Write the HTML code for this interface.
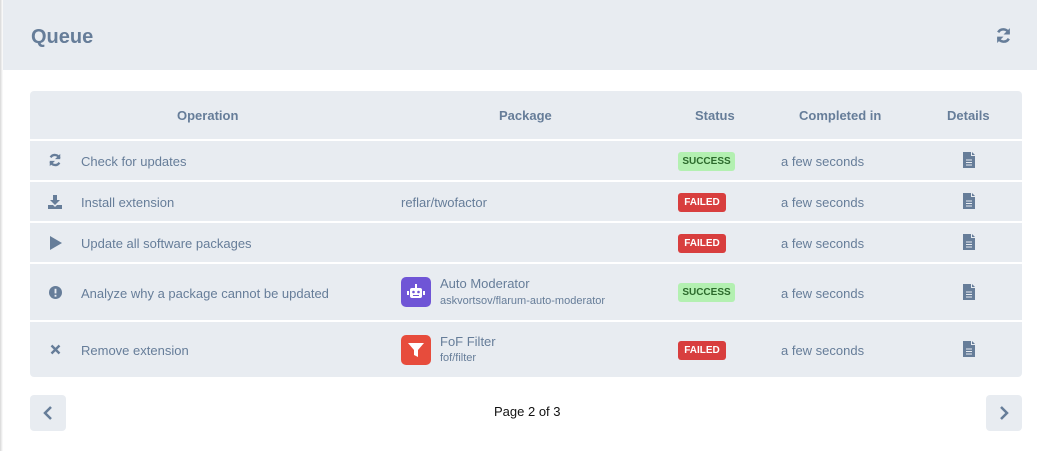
<!DOCTYPE html><html><head><style>
body{margin:0;width:1037px;height:451px;background:#fff;font-family:"Liberation Sans",sans-serif;color:#667d99;position:relative;overflow:hidden}
.hd{position:absolute;left:0;top:0;width:1037px;height:70px;background:#e8ecf1}
.sh{position:absolute;left:0;top:0;width:3px;height:451px;background:linear-gradient(90deg,#d8d8d8,#fff)}
h1{position:absolute;left:31px;top:26px;margin:0;font-size:20px;font-weight:bold;color:#667d99}
.tbl{position:absolute;left:30px;top:91px;width:992px;height:286px;background:#e8ecf1;border-radius:4px}
.ln{position:absolute;left:30px;width:992px;height:2px;background:#fff}
.t{position:absolute;font-size:13px;white-space:nowrap}
.th{font-weight:bold;top:108px}
.b{position:absolute;left:678px;height:19px;border-radius:3px;font-size:10px;font-weight:bold;line-height:19px;text-align:center;box-sizing:border-box}
.s{background:#b3f0b1;color:#2c6a2c;width:57px}
.f{background:#d83e3e;color:#fff;width:48px}
.ic{position:absolute}
.btn{position:absolute;top:395px;width:36px;height:36px;background:#e8ecf1;border-radius:4px}
</style></head><body>
<div class="hd"></div><div class="sh"></div>
<h1>Queue</h1>
<svg class="ic" style="left:995px;top:27px" width="17" height="17" viewBox="0 0 16 16"><path d="M13 6A5.5 5.5 0 0 0 3 5" stroke="#667d99" stroke-width="2.4" fill="none"/><path d="M14 1v6H8z" fill="#667d99"/><path d="M3 10a5.5 5.5 0 0 0 10 1" stroke="#667d99" stroke-width="2.4" fill="none"/><path d="M2 15V9h6z" fill="#667d99"/></svg>
<div class="tbl"></div>
<div class="ln" style="top:139px"></div><div class="ln" style="top:180px"></div><div class="ln" style="top:221px"></div><div class="ln" style="top:262px"></div><div class="ln" style="top:320px"></div>
<div class="t th" style="left:177px">Operation</div>
<div class="t th" style="left:499px">Package</div>
<div class="t th" style="left:695px">Status</div>
<div class="t th" style="left:799px">Completed in</div>
<div class="t th" style="left:947px">Details</div>

<svg class="ic" style="left:48px;top:153px" width="14" height="14" viewBox="0 0 16 16"><path d="M13 6A5.5 5.5 0 0 0 3 5" stroke="#667d99" stroke-width="2.6" fill="none"/><path d="M14 1v6H8z" fill="#667d99"/><path d="M3 10a5.5 5.5 0 0 0 10 1" stroke="#667d99" stroke-width="2.6" fill="none"/><path d="M2 15V9h6z" fill="#667d99"/></svg>
<div class="t" style="left:81px;top:154px">Check for updates</div>
<div class="b s" style="top:152px">SUCCESS</div>
<div class="t" style="left:781px;top:154px">a few seconds</div>

<svg class="ic" style="left:48px;top:195px" width="14" height="14" viewBox="0 0 14 14"><path d="M5 0h4v5h3L7 10 2 5h3z M0 10h5l2 2 2-2h5v4H0z" fill="#667d99"/></svg>
<div class="t" style="left:81px;top:195px">Install extension</div>
<div class="t" style="left:401px;top:195px">reflar/twofactor</div>
<div class="b f" style="top:193px">FAILED</div>
<div class="t" style="left:781px;top:195px">a few seconds</div>

<svg class="ic" style="left:49px;top:236px" width="13" height="14" viewBox="0 0 13 14"><path d="M1 0l12 7-12 7z" fill="#667d99"/></svg>
<div class="t" style="left:81px;top:236px">Update all software packages</div>
<div class="b f" style="top:234px">FAILED</div>
<div class="t" style="left:781px;top:236px">a few seconds</div>

<svg class="ic" style="left:49px;top:286px" width="13" height="13" viewBox="0 0 14 14"><circle cx="7" cy="7" r="7" fill="#667d99"/><rect x="6" y="3" width="2" height="5" fill="#e8ecf1"/><rect x="6" y="9.5" width="2" height="2" fill="#e8ecf1"/></svg>
<div class="t" style="left:81px;top:286px">Analyze why a package cannot be updated</div>
<div style="position:absolute;left:401px;top:277px;width:30px;height:30px;background:#6f55d6;border-radius:5px"></div>
<svg class="ic" style="left:407px;top:284px" width="18" height="16" viewBox="0 0 18 16"><rect x="8" y="0" width="2" height="4" fill="#fff"/><rect x="3" y="4" width="12" height="10" rx="2" fill="#fff"/><rect x="0" y="7" width="2" height="4" fill="#fff"/><rect x="16" y="7" width="2" height="4" fill="#fff"/><circle cx="6.5" cy="8" r="1.3" fill="#6f55d6"/><circle cx="11.5" cy="8" r="1.3" fill="#6f55d6"/><rect x="6" y="11" width="6" height="1" fill="#6f55d6"/></svg>
<div class="t" style="left:440px;top:276px">Auto Moderator</div>
<div class="t" style="left:440px;top:295px;font-size:11px">askvortsov/flarum-auto-moderator</div>
<div class="b s" style="top:283px">SUCCESS</div>
<div class="t" style="left:781px;top:286px">a few seconds</div>

<svg class="ic" style="left:50px;top:344px" width="11" height="11" viewBox="0 0 11 11"><path d="M1.5 1.5l8 8M9.5 1.5l-8 8" stroke="#667d99" stroke-width="2.4"/></svg>
<div class="t" style="left:81px;top:343px">Remove extension</div>
<div style="position:absolute;left:401px;top:335px;width:30px;height:30px;background:#e74c3c;border-radius:5px"></div>
<svg class="ic" style="left:408px;top:342px" width="16" height="16" viewBox="0 0 16 16"><path d="M0 1h16l-6 7v7l-4-2V8z" fill="#fff"/></svg>
<div class="t" style="left:440px;top:334px">FoF Filter</div>
<div class="t" style="left:440px;top:352px;font-size:11px">fof/filter</div>
<div class="b f" style="top:341px">FAILED</div>
<div class="t" style="left:781px;top:343px">a few seconds</div>

<svg class="ic" style="left:963px;top:152px" width="12" height="16" viewBox="0 0 12 16"><path d="M0 0h8v4h4v12H0z" fill="#667d99"/><path d="M9 0l3 3H9z" fill="#667d99"/><path d="M3 8h6M3 10.5h6M3 13h6" stroke="#e8ecf1" stroke-width="1"/></svg>
<svg class="ic" style="left:963px;top:193px" width="12" height="16" viewBox="0 0 12 16"><path d="M0 0h8v4h4v12H0z" fill="#667d99"/><path d="M9 0l3 3H9z" fill="#667d99"/><path d="M3 8h6M3 10.5h6M3 13h6" stroke="#e8ecf1" stroke-width="1"/></svg>
<svg class="ic" style="left:963px;top:234px" width="12" height="16" viewBox="0 0 12 16"><path d="M0 0h8v4h4v12H0z" fill="#667d99"/><path d="M9 0l3 3H9z" fill="#667d99"/><path d="M3 8h6M3 10.5h6M3 13h6" stroke="#e8ecf1" stroke-width="1"/></svg>
<svg class="ic" style="left:963px;top:284px" width="12" height="16" viewBox="0 0 12 16"><path d="M0 0h8v4h4v12H0z" fill="#667d99"/><path d="M9 0l3 3H9z" fill="#667d99"/><path d="M3 8h6M3 10.5h6M3 13h6" stroke="#e8ecf1" stroke-width="1"/></svg>
<svg class="ic" style="left:963px;top:341px" width="12" height="16" viewBox="0 0 12 16"><path d="M0 0h8v4h4v12H0z" fill="#667d99"/><path d="M9 0l3 3H9z" fill="#667d99"/><path d="M3 8h6M3 10.5h6M3 13h6" stroke="#e8ecf1" stroke-width="1"/></svg>

<div class="btn" style="left:30px"></div>
<svg class="ic" style="left:43px;top:405px" width="10" height="16" viewBox="0 0 10 16"><path d="M8 2L2 8l6 6" stroke="#667d99" stroke-width="2.5" fill="none"/></svg>
<div class="btn" style="left:986px"></div>
<svg class="ic" style="left:999px;top:405px" width="10" height="16" viewBox="0 0 10 16"><path d="M2 2l6 6-6 6" stroke="#667d99" stroke-width="2.5" fill="none"/></svg>
<div class="t" style="left:494px;top:404px;color:#111">Page 2 of 3</div>
</body></html>
